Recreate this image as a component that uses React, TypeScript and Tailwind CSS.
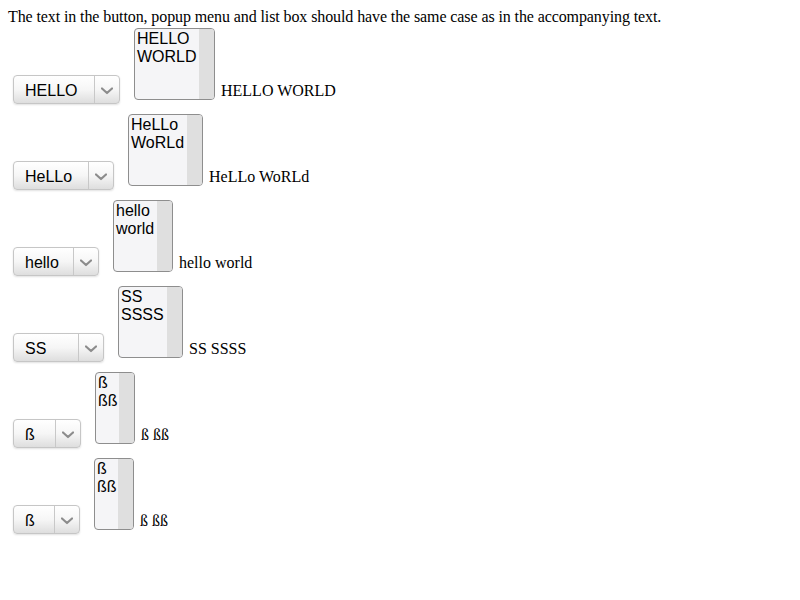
import React from "react";

type Row = {
  popup: string;
  popupW: number;
  list: [string, string];
  listW: number;
  text: string;
};

const rows: Row[] = [
  { popup: "HELLO", popupW: 107, list: ["HELLO", "WORLD"], listW: 81, text: "HELLO WORLD" },
  { popup: "HeLLo", popupW: 101, list: ["HeLLo", "WoRLd"], listW: 75, text: "HeLLo WoRLd" },
  { popup: "hello", popupW: 86, list: ["hello", "world"], listW: 60, text: "hello world" },
  { popup: "SS", popupW: 91, list: ["SS", "SSSS"], listW: 65, text: "SS SSSS" },
  { popup: "ß", popupW: 68, list: ["ß", "ßß"], listW: 40, text: "ß ßß" },
  { popup: "ß", popupW: 67, list: ["ß", "ßß"], listW: 40, text: "ß ßß" },
];

function Chevron() {
  return (
    <svg width="12" height="8" viewBox="0 0 12 8" className="block">
      <path d="M1 1.5 L6 6 L11 1.5" fill="none" stroke="#8c8c8c" strokeWidth="2.2" strokeLinecap="round" strokeLinejoin="round" />
    </svg>
  );
}

function Popup({ label, w }: { label: string; w: number }) {
  return (
    <div
      className="relative flex h-[29px] shrink-0 items-stretch rounded-[4px] border border-[#c6c6c6] bg-gradient-to-b from-white via-[#f6f6f6] to-[#dedede] shadow-[0_1px_2px_rgba(0,0,0,0.12)]"
      style={{ width: w }}
    >
      <div className="flex flex-1 items-center pl-[11px] pt-[2px] text-[16px] leading-none text-black">{label}</div>
      <div className="flex w-[25px] items-center justify-center border-l border-[#c8c8c8] pt-[3px]">
        <Chevron />
      </div>
    </div>
  );
}

function ListBox({ items, w }: { items: [string, string]; w: number }) {
  return (
    <div
      className="flex h-[72px] shrink-0 overflow-hidden rounded-[4px] border border-[#8e8e8e] bg-[#f5f5f7]"
      style={{ width: w }}
    >
      <div className="flex-1 pl-[2px] pt-[1px] text-[16px] leading-[18px] text-black">
        <div>{items[0]}</div>
        <div>{items[1]}</div>
      </div>
      <div className="w-[15px] bg-[#dfdfdf]" />
    </div>
  );
}

export default function App() {
  return (
    <div className="m-[8px] font-['Liberation_Sans',Arial,sans-serif] text-black">
      <div className="font-['Liberation_Serif','Times_New_Roman',serif] text-[16px] leading-[18px] tracking-[-0.1px]">
        The text in the button, popup menu and list box should have the same case as in the accompanying text.
      </div>
      {rows.map((r, i) => (
        <div key={i} className="flex h-[86px] items-end">
          <div className="mb-[8px] ml-[5px]">
            <Popup label={r.popup} w={r.popupW} />
          </div>
          <div className="mb-[12px] ml-[14px]">
            <ListBox items={r.list} w={r.listW} />
          </div>
          <div className="mb-[12px] ml-[6px] font-['Liberation_Serif','Times_New_Roman',serif] text-[16px] leading-[18px]">
            {r.text}
          </div>
        </div>
      ))}
    </div>
  );
}
